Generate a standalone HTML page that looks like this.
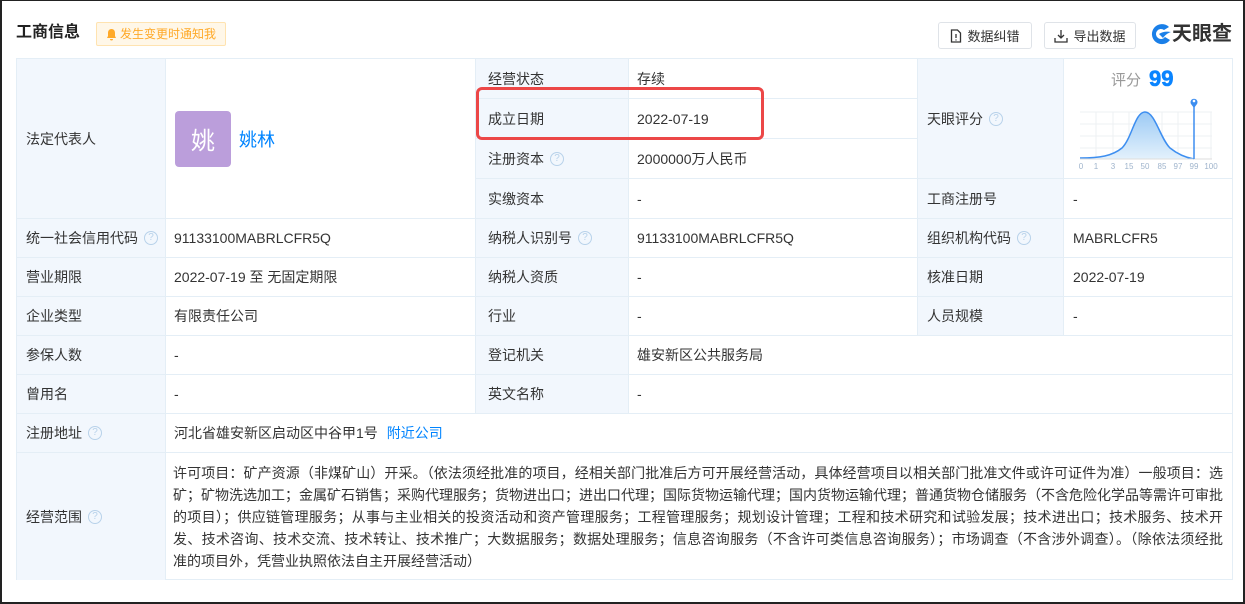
<!DOCTYPE html>
<html><head><meta charset="utf-8"><style>
*{box-sizing:border-box;margin:0;padding:0}
body{width:1245px;height:604px;overflow:hidden;background:#fff;font-family:"Liberation Sans","Noto Sans CJK SC",sans-serif;font-size:14px;color:#333;position:relative}
.frame{position:absolute;left:0;top:0;width:1245px;height:604px;border:1px solid #222;border-left-width:2px;border-bottom-width:2px;border-right-width:2px}
.c{position:absolute;border-top:1px solid #e4eef6;border-left:1px solid #e4eef6;display:flex;align-items:center;padding-left:9px;white-space:nowrap}
.l{background:#f2f7fd}
.q{display:inline-block;width:14px;height:14px;border:1px solid #b8d2ea;border-radius:50%;color:#b8d2ea;font-size:10px;line-height:12px;text-align:center;margin-left:6px}
.btn{position:absolute;top:22px;height:27px;border:1px solid #dfe3e8;border-radius:3px;font-size:13px;display:flex;align-items:center;justify-content:center;color:#333}
a{color:#0084ff;text-decoration:none}
.scope div{text-align:justify;text-align-last:justify;height:22px;line-height:22px;white-space:nowrap;overflow:hidden}
</style></head><body>
<div class="frame"></div>
<div style="position:absolute;left:16px;top:22px;font-size:16px;font-weight:bold;color:#222;line-height:22px">工商信息</div>
<div style="position:absolute;left:96px;top:22px;width:130px;height:24px;background:#fff7e8;border:1px solid #ffe3b0;border-radius:2px;color:#ffa928;font-size:12px;line-height:22px;padding-left:23px">
<svg style="position:absolute;left:9px;top:5px" width="11" height="13" viewBox="0 0 11 13"><path d="M5.5 1C3 1 2 3 2 5v3L1 10h9L9 8V5C9 3 8 1 5.5 1z M4 11h3a1.5 1.5 0 0 1-3 0z" fill="#ffa928"/></svg>发生变更时通知我</div>
<div class="btn" style="left:938px;width:94px"><svg width="12" height="14" viewBox="0 0 12 14" style="margin-right:5px"><path d="M1.5 1h6l3 3v9h-9z" fill="none" stroke="#333" stroke-width="1.3"/><path d="M6 5v4M6 10.5v1" stroke="#333" stroke-width="1.3"/></svg>数据纠错</div>
<div class="btn" style="left:1044px;width:92px"><svg width="14" height="14" viewBox="0 0 14 14" style="margin-right:5px"><path d="M7 1v8M4 6l3 3 3-3M1 9v4h12V9" fill="none" stroke="#333" stroke-width="1.3"/></svg>导出数据</div>
<svg style="position:absolute;left:1151px;top:23px" width="22" height="22" viewBox="0 0 22 22"><path d="M18 4A10 10 0 1 0 19 17L14 14A5 5 0 1 1 13 7z" fill="#1a7fe8"/><path d="M8 11c3-2 7-3 12-2-3 1-6 3-8 6z" fill="#1a7fe8"/></svg>
<div style="position:absolute;left:1172px;top:21px;font-size:20px;font-weight:bold;color:#333;line-height:26px">天眼查</div>

<div style="position:absolute;left:16px;top:58px;width:1217px;height:522px;border-right:1px solid #e4eef6;border-bottom:1px solid #e4eef6">
</div>
<div class="c l" style="left:16px;top:58px;width:149px;height:160px">法定代表人</div>
<div class="c" style="left:165px;top:58px;width:310px;height:160px">
<div style="width:56px;height:56px;background:#bb9edb;border-radius:4px;color:#fff;font-size:24px;display:flex;align-items:center;justify-content:center;margin-right:8px">姚</div><a style="font-size:18px">姚林</a></div>
<div class="c l" style="left:475px;top:58px;width:153px;height:40px;padding-left:12px">经营状态</div>
<div class="c" style="left:628px;top:58px;width:289px;height:40px;padding-left:8px">存续</div>
<div class="c l" style="left:475px;top:98px;width:153px;height:40px;padding-left:12px">成立日期</div>
<div class="c" style="left:628px;top:98px;width:289px;height:40px;padding-left:8px">2022-07-19</div>
<div class="c l" style="left:475px;top:138px;width:153px;height:40px;padding-left:12px">注册资本<span class="q">?</span></div>
<div class="c" style="left:628px;top:138px;width:289px;height:40px;padding-left:8px">2000000万人民币</div>
<div class="c l" style="left:475px;top:178px;width:153px;height:40px;padding-left:12px">实缴资本</div>
<div class="c" style="left:628px;top:178px;width:289px;height:40px;padding-left:8px">-</div>
<div class="c l" style="left:917px;top:58px;width:146px;height:120px">天眼评分<span class="q">?</span></div>
<div class="c" style="left:1063px;top:58px;width:170px;height:120px"></div>
<div style="position:absolute;left:1111px;top:69px;font-size:15px;color:#999">评分</div>
<div style="position:absolute;left:1149px;top:66px;font-size:22px;font-weight:900;color:#0a84ff;line-height:26px;-webkit-text-stroke:0.6px #0a84ff">99</div>
<svg style="position:absolute;left:1075px;top:95px" width="150" height="80" viewBox="1075 95 150 80">
<g stroke="#eef0f3" stroke-width="1"><path d="M1080 112H1212M1080 124H1212M1080 136H1212M1080 148H1212"/><path d="M1096 112V159M1113 112V159M1129 112V159M1145 112V159M1162 112V159M1178 112V159M1211 112V159"/></g>
<defs><linearGradient id="g" x1="0" y1="0" x2="0" y2="1"><stop offset="0" stop-color="#9ccaf5"/><stop offset="1" stop-color="#e3f1fc"/></linearGradient></defs>
<path d="M1080 158C1100 158 1112 156 1122 148C1132 138 1135 112 1145 112C1155 112 1160 138 1170 148C1180 156 1188 158 1194 159V159H1080Z" fill="url(#g)"/>
<path d="M1080 158C1100 158 1112 156 1122 148C1132 138 1135 112 1145 112C1155 112 1160 138 1170 148C1180 156 1188 158 1194 159" fill="none" stroke="#3d8ef0" stroke-width="1.5"/>
<path d="M1080 159H1212" stroke="#ddd"/>
<path d="M1194 104V159" stroke="#3d8ef0" stroke-width="1.5"/>
<path d="M1194 108l-3-4a3.5 3.5 0 1 1 6 0z" fill="#3d8ef0"/><circle cx="1194" cy="101" r="1.3" fill="#fff"/>
<g font-size="8" fill="#9fb4cc" text-anchor="middle" font-family="Liberation Sans"><text x="1081" y="169">0</text><text x="1096" y="169">1</text><text x="1113" y="169">3</text><text x="1129" y="169">15</text><text x="1145" y="169">50</text><text x="1162" y="169">85</text><text x="1178" y="169">97</text><text x="1194" y="169">99</text><text x="1211" y="169">100</text></g>
</svg>
<div class="c l" style="left:917px;top:178px;width:146px;height:40px">工商注册号</div>
<div class="c" style="left:1063px;top:178px;width:170px;height:40px">-</div>

<div class="c l" style="left:16px;top:218px;width:149px;height:39px">统一社会信用代码<span class="q">?</span></div>
<div class="c" style="left:165px;top:218px;width:310px;height:39px;padding-left:8px">91133100MABRLCFR5Q</div>
<div class="c l" style="left:475px;top:218px;width:153px;height:39px;padding-left:12px">纳税人识别号<span class="q">?</span></div>
<div class="c" style="left:628px;top:218px;width:289px;height:39px;padding-left:8px">91133100MABRLCFR5Q</div>
<div class="c l" style="left:917px;top:218px;width:146px;height:39px">组织机构代码<span class="q">?</span></div>
<div class="c" style="left:1063px;top:218px;width:170px;height:39px">MABRLCFR5</div>

<div class="c l" style="left:16px;top:257px;width:149px;height:39px">营业期限</div>
<div class="c" style="left:165px;top:257px;width:310px;height:39px;padding-left:8px">2022-07-19 至 无固定期限</div>
<div class="c l" style="left:475px;top:257px;width:153px;height:39px;padding-left:12px">纳税人资质</div>
<div class="c" style="left:628px;top:257px;width:289px;height:39px;padding-left:8px">-</div>
<div class="c l" style="left:917px;top:257px;width:146px;height:39px">核准日期</div>
<div class="c" style="left:1063px;top:257px;width:170px;height:39px">2022-07-19</div>

<div class="c l" style="left:16px;top:296px;width:149px;height:39px">企业类型</div>
<div class="c" style="left:165px;top:296px;width:310px;height:39px;padding-left:8px">有限责任公司</div>
<div class="c l" style="left:475px;top:296px;width:153px;height:39px;padding-left:12px">行业</div>
<div class="c" style="left:628px;top:296px;width:289px;height:39px;padding-left:8px">-</div>
<div class="c l" style="left:917px;top:296px;width:146px;height:39px">人员规模</div>
<div class="c" style="left:1063px;top:296px;width:170px;height:39px">-</div>

<div class="c l" style="left:16px;top:335px;width:149px;height:39px">参保人数</div>
<div class="c" style="left:165px;top:335px;width:310px;height:39px;padding-left:8px">-</div>
<div class="c l" style="left:475px;top:335px;width:153px;height:39px;padding-left:12px">登记机关</div>
<div class="c" style="left:628px;top:335px;width:605px;height:39px;padding-left:8px">雄安新区公共服务局</div>

<div class="c l" style="left:16px;top:374px;width:149px;height:39px">曾用名</div>
<div class="c" style="left:165px;top:374px;width:310px;height:39px;padding-left:8px">-</div>
<div class="c l" style="left:475px;top:374px;width:153px;height:39px;padding-left:12px">英文名称</div>
<div class="c" style="left:628px;top:374px;width:605px;height:39px;padding-left:8px">-</div>

<div class="c l" style="left:16px;top:413px;width:149px;height:39px">注册地址<span class="q">?</span></div>
<div class="c" style="left:165px;top:413px;width:1068px;height:39px;padding-left:8px">河北省雄安新区启动区中谷甲1号<a style="margin-left:9px">附近公司</a></div>

<div class="c l" style="left:16px;top:452px;width:149px;height:128px">经营范围<span class="q">?</span></div>
<div class="c" style="left:165px;top:452px;width:1068px;height:128px;padding-left:8px"></div>
<div class="scope" style="position:absolute;left:173px;top:462px;width:1050px;font-size:14px">
<div>许可项目：矿产资源（非煤矿山）开采。（依法须经批准的项目，经相关部门批准后方可开展经营活动，具体经营项目以相关部门批准文件或许可证件为准）一般项目：选</div>
<div>矿；矿物洗选加工；金属矿石销售；采购代理服务；货物进出口；进出口代理；国际货物运输代理；国内货物运输代理；普通货物仓储服务（不含危险化学品等需许可审批</div>
<div>的项目）；供应链管理服务；从事与主业相关的投资活动和资产管理服务；工程管理服务；规划设计管理；工程和技术研究和试验发展；技术进出口；技术服务、技术开</div>
<div>发、技术咨询、技术交流、技术转让、技术推广；大数据服务；数据处理服务；信息咨询服务（不含许可类信息咨询服务）；市场调查（不含涉外调查）。（除依法须经批</div>
<div style="text-align-last:left">准的项目外，凭营业执照依法自主开展经营活动）</div>
</div>

<div style="position:absolute;left:476px;top:87px;width:288px;height:53px;border:3px solid #ec4747;border-radius:6px"></div>
</body></html>
